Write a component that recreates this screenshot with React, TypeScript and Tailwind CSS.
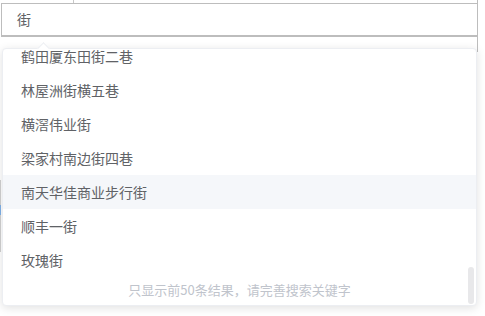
import React from "react";

const items = [
  "鹤田厦东田街二巷",
  "林屋洲街横五巷",
  "横滘伟业街",
  "梁家村南边街四巷",
  "南天华佳商业步行街",
  "顺丰一街",
  "玫瑰街",
];

export default function App() {
  return (
    <div
      className="relative w-[485px] h-[316px] bg-white overflow-hidden"
      style={{ fontFamily: '"Noto Sans CJK SC", "Noto Sans", sans-serif' }}
    >
      {/* background fragments */}
      <div className="absolute left-[73px] top-0 w-px h-[3px] bg-[#c8c8c8]" />
      <div className="absolute left-[477px] top-0 w-px h-[52px] bg-[#bdbdbd]" />
      <div className="absolute left-0 top-[180px] w-px h-[72px] bg-[#d0d0d0]" />
      <div className="absolute left-0 top-[205px] w-px h-[10px] bg-[#7fb0e6]" />

      <div className="pt-[3px] pl-[1px]">
        <div className="w-[477px] h-[34px] border border-b-2 border-[#bdbdbd] bg-white flex items-center pl-[15px] text-[14px] text-[#606266]">
          街
        </div>
      </div>

      {/* dropdown */}
      <div className="absolute top-[48px] left-[2px] w-[475px] h-[258px] bg-white rounded-[4px] border border-[#eceef2] shadow-[0_2px_10px_rgba(0,0,0,0.12)]">
        <div className="absolute -top-[5px] left-[36px] w-[9px] h-[9px] rotate-45 bg-white border-t border-l border-[#eceef2]" />
        <div className="relative h-full overflow-hidden rounded-[4px]">
          <div className="-mt-[10px] flex flex-col">
            {items.map((t, i) => (
              <div
                key={t}
                className={`h-[34px] flex items-center pl-[18px] text-[14px] text-[#606266] ${
                  i === 4 ? "bg-[#f5f7fa]" : ""
                }`}
              >
                {t}
              </div>
            ))}
            <div className="h-[26px] flex items-center justify-center text-[13px] text-[#c0c4cc]">
              只显示前50条结果，请完善搜索关键字
            </div>
          </div>
          <div className="absolute right-[2px] top-[218px] w-[6px] h-[37px] rounded-[3px] bg-[#e8e8ea]" />
        </div>
      </div>
    </div>
  );
}
